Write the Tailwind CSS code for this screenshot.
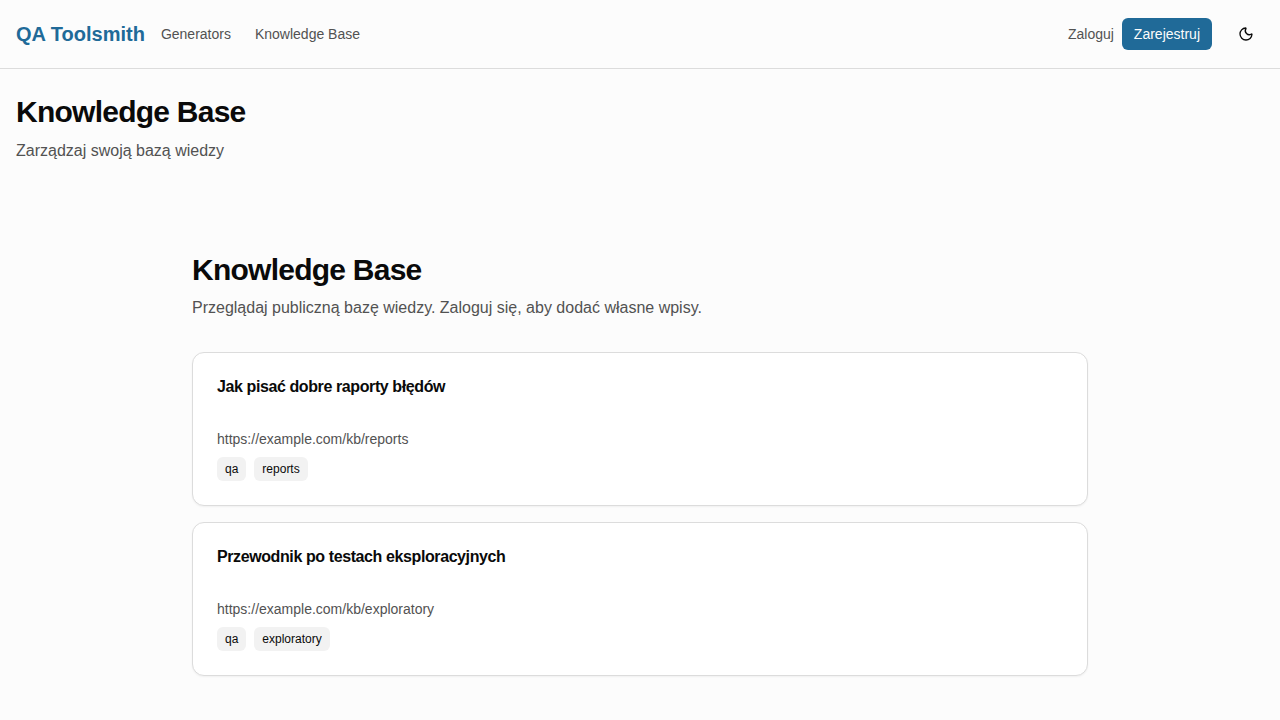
<!DOCTYPE html>
<html lang="pl">
<head>
<meta charset="utf-8">
<meta name="viewport" content="width=device-width, initial-scale=1">
<title>Knowledge Base – QA Toolsmith</title>
<script src="https://cdn.jsdelivr.net/npm/@tailwindcss/browser@4"></script>
</head>
<body class="min-h-screen bg-[#fcfcfc] font-['Liberation_Sans',Arial,sans-serif] text-[#0a0a0a]">
<header class="border-b border-[#dcdcdc]">
  <div class="flex items-center justify-between px-4 py-4">
    <div class="flex items-center gap-4">
      <a href="#" class="text-xl font-bold text-[#206a98]">QA Toolsmith</a>
      <nav class="flex items-center gap-6 text-sm text-[#525252]">
        <a href="#">Generators</a>
        <a href="#">Knowledge Base</a>
      </nav>
    </div>
    <div class="flex items-center gap-4">
      <div class="flex items-center gap-2 text-sm">
        <a href="#" class="text-[#525252]">Zaloguj</a>
        <a href="#" class="flex h-8 items-center rounded-md bg-[#206a98] px-3 text-[#fcfcfc]">Zarejestruj</a>
      </div>
      <button type="button" aria-label="Zmień motyw" class="flex size-9 items-center justify-center rounded-md">
        <svg class="size-4" viewBox="0 0 24 24" fill="none" stroke="currentColor" stroke-width="2" stroke-linecap="round" stroke-linejoin="round" aria-hidden="true"><path d="M20.985 12.486a9 9 0 1 1-9.473-9.472c.405-.022.617.46.402.803a6 6 0 0 0 8.268 8.268c.344-.215.825-.004.803.401"/></svg>
      </button>
    </div>
  </div>
</header>
<main>
  <div class="px-4 py-6">
    <h1 class="text-3xl leading-tight font-bold tracking-tight">Knowledge Base</h1>
    <p class="mt-2 text-[#525252]">Zarządzaj swoją bazą wiedzy</p>
  </div>
  <section class="mx-auto max-w-4xl pt-16 pb-11">
    <h2 class="text-3xl leading-tight font-bold tracking-tight">Knowledge Base</h2>
    <p class="mt-2 text-[#525252]">Przeglądaj publiczną bazę wiedzy. Zaloguj się, aby dodać własne wpisy.</p>
    <div class="mt-8 flex flex-col gap-4">
      <article class="rounded-xl border border-[#dcdcdc] bg-white p-6 shadow-xs">
        <h3 class="leading-5 font-bold tracking-tight">Jak pisać dobre raporty błędów</h3>
        <a href="https://example.com/kb/reports" class="mt-8 block text-sm text-[#525252]">https://example.com/kb/reports</a>
        <ul class="mt-2 flex gap-2 text-xs">
          <li class="rounded-md bg-[#f2f2f2] px-2 py-1">qa</li>
          <li class="rounded-md bg-[#f2f2f2] px-2 py-1">reports</li>
        </ul>
      </article>
      <article class="rounded-xl border border-[#dcdcdc] bg-white p-6 shadow-xs">
        <h3 class="leading-5 font-bold tracking-tight">Przewodnik po testach eksploracyjnych</h3>
        <a href="https://example.com/kb/exploratory" class="mt-8 block text-sm text-[#525252]">https://example.com/kb/exploratory</a>
        <ul class="mt-2 flex gap-2 text-xs">
          <li class="rounded-md bg-[#f2f2f2] px-2 py-1">qa</li>
          <li class="rounded-md bg-[#f2f2f2] px-2 py-1">exploratory</li>
        </ul>
      </article>
    </div>
  </section>
</main>
</body>
</html>
